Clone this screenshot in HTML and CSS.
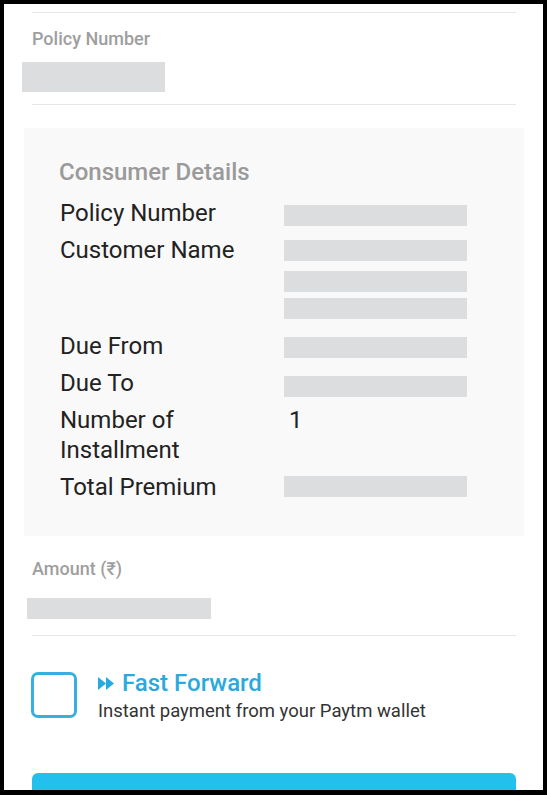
FILE: index.html
```html
<!DOCTYPE html>
<html lang="en">
<head>
<meta charset="utf-8">
<title>Policy Payment</title>
<link rel="stylesheet" href="styles.css">
</head>
<body>
<div class="frame">
  <div class="content">
    <hr class="divider divider-top">
    <div class="field-label field-label-policy">Policy Number</div>
    <div class="redact redact-policy"></div>
    <hr class="divider divider-policy">

    <section class="panel">
      <h2 class="panel-title">Consumer Details</h2>
      <div class="details">
        <div class="label">Policy Number</div>
        <div class="value"><span class="redact redact-row redact-mt7"></span></div>

        <div class="label">Customer Name</div>
        <div class="value value-multi">
          <span class="redact redact-row redact-mt5"></span>
          <span class="redact redact-row redact-mt10"></span>
          <span class="redact redact-row redact-mt6"></span>
        </div>

        <div class="label">Due From</div>
        <div class="value"><span class="redact redact-row redact-mt6"></span></div>

        <div class="label">Due To</div>
        <div class="value"><span class="redact redact-row redact-mt8"></span></div>

        <div class="label">Number of<br>Installment</div>
        <div class="value value-text">1</div>

        <div class="label">Total Premium</div>
        <div class="value"><span class="redact redact-row redact-mt4"></span></div>
      </div>
    </section>

    <div class="field-label field-label-amount">Amount (₹)</div>
    <div class="redact redact-amount"></div>
    <hr class="divider divider-amount">

    <div class="fast-forward">
      <span class="checkbox"></span>
      <div class="ff-text">
        <div class="ff-title">
          <svg class="ff-icon" width="18" height="13" viewBox="0 0 18 13" aria-hidden="true">
            <path d="M0 0 L8 6.5 L0 13 Z M8 0 L16 6.5 L8 13 Z" fill="#29a9dd"/>
          </svg>
          <span>Fast Forward</span>
        </div>
        <div class="ff-sub">Instant payment from your Paytm wallet</div>
      </div>
    </div>

    <div class="pay-button"></div>
  </div>
</div>
</body>
</html>
```

FILE: styles.css
```css
html, body {
  margin: 0;
  padding: 0;
  background: #000;
  height: 795px;
  overflow: hidden;
}

.frame {
  margin: 4px 4px 0 4px;
  height: 786px;
  background: #fff;
  overflow: hidden;
  font-family: Roboto, "Noto Sans", "DejaVu Sans", sans-serif;
}

.content {
  padding: 0 27px 0 28px;
}

.divider {
  border: 0;
  height: 1px;
  background: #e6e6e6;
  margin: 0;
}

.divider-top { margin-top: 8px; }

.field-label {
  font-size: 18px;
  line-height: 20px;
  font-weight: 500;
  color: #9e9e9e;
}

.field-label-policy { margin-top: 16px; }

.redact {
  display: block;
  background: #dcdddf;
}

.redact-policy {
  margin: 13px 0 0 -10px;
  width: 143px;
  height: 30px;
}

.divider-policy { margin-top: 12px; }

.panel {
  margin: 23px -8px 0 -8px;
  background: #f9f9f9;
  padding: 30px 20px 34px 35px;
}

.panel-title {
  margin: 0 0 12px 0;
  font-size: 24px;
  line-height: 28px;
  font-weight: 500;
  color: #9a9a9a;
}

.details {
  display: grid;
  grid-template-columns: 224px 183px;
  row-gap: 7px;
  padding-left: 1px;
}

.label {
  font-size: 24px;
  line-height: 30px;
  color: #222;
}

.value {
  display: flex;
  flex-direction: column;
}

.value-multi { padding-bottom: 5px; }

.value-text {
  font-size: 24px;
  line-height: 30px;
  color: #222;
  padding-left: 5px;
}

.redact-row {
  width: 183px;
  height: 21px;
}

.redact-mt4 { margin-top: 4px; }
.redact-mt5 { margin-top: 5px; }
.redact-mt6 { margin-top: 6px; }
.redact-mt7 { margin-top: 7px; }
.redact-mt8 { margin-top: 8px; }
.redact-mt10 { margin-top: 10px; }

.field-label-amount { margin-top: 23px; }

.redact-amount {
  margin: 19px 0 0 -5px;
  width: 184px;
  height: 21px;
}

.divider-amount { margin-top: 16px; }

.fast-forward {
  display: flex;
  align-items: flex-start;
  margin-top: 36px;
}

.checkbox {
  flex: none;
  width: 40px;
  height: 40px;
  border: 3px solid #37afe1;
  border-radius: 7px;
  margin-left: -1px;
}

.ff-text {
  margin-left: 21px;
  margin-top: -4px;
}

.ff-title {
  display: flex;
  align-items: center;
  gap: 6px;
  font-size: 24px;
  line-height: 30px;
  font-weight: 500;
  color: #29a9dd;
}

.ff-icon {
  flex: none;
  margin-top: 1px;
}

.ff-sub {
  font-size: 18.5px;
  line-height: 24px;
  color: #333;
  margin-top: 1px;
}

.pay-button {
  margin-top: 50px;
  height: 40px;
  background: #23c0ee;
  border-radius: 6px;
}
```
